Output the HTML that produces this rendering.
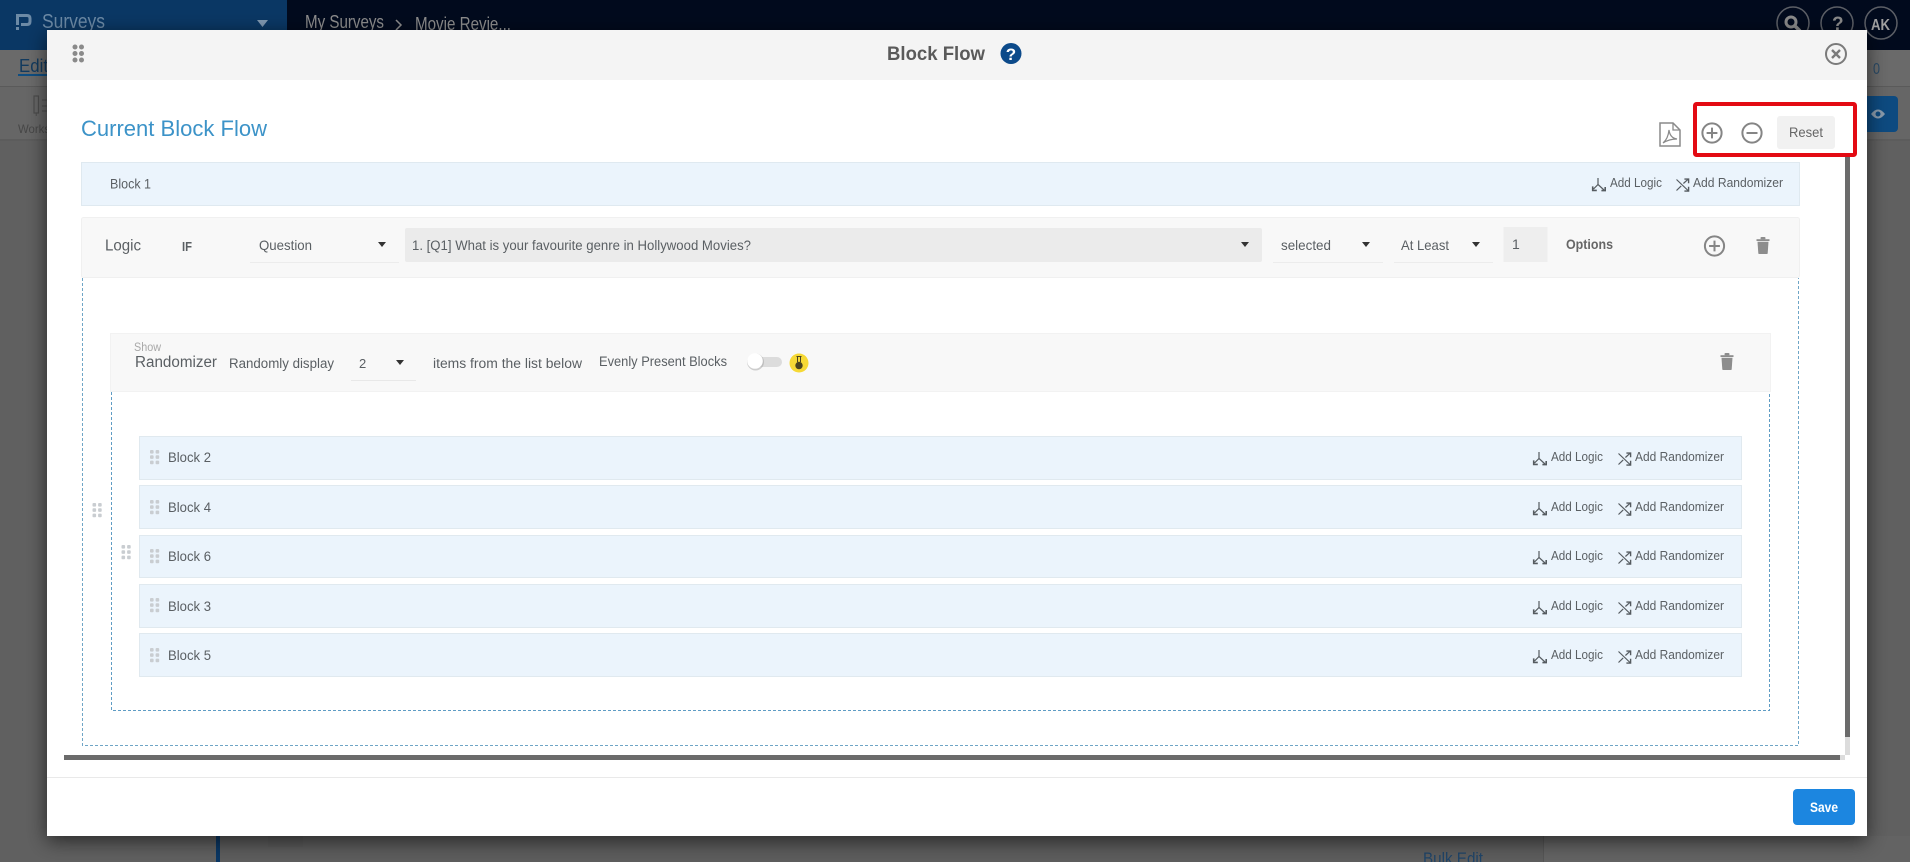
<!DOCTYPE html>
<html lang="en">
<head>
<meta charset="utf-8">
<title>Block Flow</title>
<style>
html,body{margin:0;padding:0;background:#606060;width:1910px;height:862px;overflow:hidden}
svg{display:block;position:absolute;left:0;top:0}
text{font-family:"Liberation Sans",sans-serif;fill:#5a5f63;font-size:13px}
</style>
</head>
<body>
<svg width="1910" height="862" viewBox="0 0 1910 862" xmlns="http://www.w3.org/2000/svg">
<defs>
<filter id="sh" x="-5%" y="-5%" width="110%" height="112%"><feDropShadow dx="0" dy="5" stdDeviation="10" flood-color="#000" flood-opacity=".6"/></filter>
<g id="grip" fill="#c9cdd1"><rect x="0" y="0" width="3.6" height="3.6" rx="1"/><rect x="5.6" y="0" width="3.6" height="3.6" rx="1"/><rect x="0" y="5.3" width="3.6" height="3.6" rx="1"/><rect x="5.6" y="5.3" width="3.6" height="3.6" rx="1"/><rect x="0" y="10.6" width="3.6" height="3.6" rx="1"/><rect x="5.6" y="10.6" width="3.6" height="3.6" rx="1"/></g>
<g id="logic" fill="none" stroke="#555b60" stroke-width="1.2"><path d="M6 0V6.5L12 12"/><path d="M6 6.5L1.5 11"/><path d="M0.7 8.4V12.4H4.8" stroke-width="1.6"/><path d="M13.2 9V12.6H9.4" stroke-width="1.6"/></g>
<g id="rand" fill="none" stroke="#555b60" stroke-width="1.2"><path d="M0.5 1L12 12"/><path d="M0.5 12L5.2 7.4"/><path d="M7.4 5L12 0.8"/><path d="M8.4 0.6H12.6V4.8" stroke-width="1.4"/><path d="M12.6 8.2V12.6H8.4" stroke-width="1.4"/></g>
<g id="trash" fill="#8d8d8d"><rect x="0" y="2.2" width="13" height="1.8"/><rect x="4" y="0" width="5" height="2.4" rx="1"/><path d="M1 4.8H12L11.2 16.2Q11.1 17 10.2 17H2.8Q1.9 17 1.8 16.2Z"/></g>
<g id="plus" fill="none" stroke="#858585" stroke-width="2"><circle cx="0" cy="0" r="9.6"/><path d="M-5.4 0H5.4M0 -5.4V5.4"/></g>
<g id="rowacts">
<use href="#logic" x="1533" y="-9"/>
<text x="1551" y="0" textLength="52" lengthAdjust="spacingAndGlyphs">Add Logic</text>
<use href="#rand" x="1618" y="-8.5"/>
<text x="1635" y="0" textLength="89" lengthAdjust="spacingAndGlyphs">Add Randomizer</text>
</g>
</defs>

<!-- dimmed page behind the modal -->
<rect width="1910" height="862" fill="#606060"/>
<rect x="0" y="0" width="1910" height="50" fill="#010a1d"/>
<rect x="0" y="0" width="287" height="50" fill="#0a3764"/>
<rect x="0" y="50" width="1910" height="36" fill="#6a6a6a"/>
<rect x="0" y="86" width="1910" height="54" fill="#666"/>
<rect x="0" y="86" width="1910" height="1" fill="#5a5a5a"/>
<rect x="0" y="139" width="1910" height="2" fill="#5c5c5c"/>
<rect x="1543" y="836" width="367" height="26" fill="#636363"/>
<rect x="220" y="836" width="1323" height="26" fill="#5d5d5d"/>
<rect x="216" y="836" width="4" height="26" fill="#0a3764"/>
<rect x="268" y="836" width="35" height="11" fill="#595959"/>
<rect x="1543" y="836" width="1" height="26" fill="#555"/>
<text x="1423" y="864" textLength="60" lengthAdjust="spacingAndGlyphs" style="font-size:17px;fill:#1f4468">Bulk Edit</text>

<path d="M17.500 25V15.500H27Q30 15.500 30 18.500V21.500Q30 24.500 27 24.500H21" fill="none" stroke="#6c8aa6" stroke-width="3"/>
<rect x="16" y="27" width="3" height="3" fill="#6c8aa6"/>
<text x="42" y="28" textLength="63" lengthAdjust="spacingAndGlyphs" style="font-size:20px;fill:#6c8aa6">Surveys</text>
<path d="M257 20H268L262.500 27Z" fill="#7f98b0"/>
<text x="305" y="28" textLength="79" lengthAdjust="spacingAndGlyphs" style="font-size:18px;fill:#8d8d8d">My Surveys</text>
<path d="M396 20L401 25L396 30" fill="none" stroke="#8d8d8d" stroke-width="1.500"/>
<text x="415" y="30" textLength="96" lengthAdjust="spacingAndGlyphs" style="font-size:18px;fill:#8d8d8d">Movie Revie...</text>
<g fill="none" stroke="#5c5f66" stroke-width="1.500"><circle cx="1793" cy="23" r="16"/><circle cx="1837" cy="23" r="16"/><circle cx="1881" cy="23" r="16"/></g>
<circle cx="1791" cy="22" r="5" fill="none" stroke="#8a8a8a" stroke-width="3"/><path d="M1795 26L1800 31" stroke="#8a8a8a" stroke-width="3.500"/>
<text x="1832" y="30" style="font-size:19px;font-weight:bold;fill:#8a8a8a">?</text>
<text x="1871" y="30" textLength="19" lengthAdjust="spacingAndGlyphs" style="font-size:16px;font-weight:bold;fill:#a0a0a0">AK</text>
<text x="19" y="72" textLength="29" lengthAdjust="spacingAndGlyphs" style="font-size:18px;fill:#123a5e">Edit</text>
<rect x="18" y="74" width="30" height="2" fill="#0f4e82"/>
<rect x="34" y="96" width="4.500" height="17" fill="none" stroke="#4c4c4c" stroke-width="1.200"/>
<path d="M36.200 113V116M42 100H47M42 106H47M42 111H47" stroke="#4c4c4c"/>
<text x="18" y="133" textLength="32" lengthAdjust="spacingAndGlyphs" style="font-size:12px;fill:#474747">Works</text>
<text x="1873" y="74" textLength="7" lengthAdjust="spacingAndGlyphs" style="font-size:16px;fill:#2a4a66">0</text>
<rect x="1860" y="96" width="38" height="36" rx="4" fill="#0d4a80"/>
<path d="M1871 114Q1878 105 1885 114Q1878 123 1871 114Z" fill="#8a9bab"/><circle cx="1878" cy="114" r="2.500" fill="#0d4a80"/>

<!-- modal -->
<rect x="47" y="30" width="1820" height="806" fill="#fff" filter="url(#sh)"/>
<rect x="47" y="30" width="1820" height="50" fill="#f4f4f4"/>
<g fill="#8a8a8a"><circle cx="75" cy="47" r="2.500"/><circle cx="81.500" cy="47" r="2.500"/><circle cx="75" cy="53.500" r="2.500"/><circle cx="81.500" cy="53.500" r="2.500"/><circle cx="75" cy="60" r="2.500"/><circle cx="81.500" cy="60" r="2.500"/></g>
<text x="887" y="60" textLength="98" lengthAdjust="spacingAndGlyphs" style="font-size:19.500px;font-weight:bold;fill:#5a5a5a">Block Flow</text>
<circle cx="1011" cy="53.500" r="10.500" fill="#0c4a8a"/>
<text x="1011" y="60" text-anchor="middle" style="font-size:17px;font-weight:bold;fill:#fff">?</text>
<circle cx="1836" cy="54" r="10" fill="none" stroke="#7b7b7b" stroke-width="2"/>
<path d="M1832 50L1840 58M1840 50L1832 58" stroke="#7b7b7b" stroke-width="2.400"/>

<text x="81" y="136" textLength="186" lengthAdjust="spacingAndGlyphs" style="font-size:22px;fill:#3c93c8">Current Block Flow</text>

<!-- pdf icon -->
<path d="M1660 123H1673L1680 130V146H1660Z" fill="none" stroke="#8a8a8a" stroke-width="1.500"/>
<path d="M1673 123V130H1680" fill="none" stroke="#8a8a8a" stroke-width="1.300"/>
<path d="M1663 143Q1668 139 1669 130Q1670 138 1677 139Q1669 139 1663 143Z" fill="none" stroke="#8a8a8a" stroke-width="1.200"/>
<!-- zoom controls -->
<use href="#plus" x="1712" y="133"/>
<g fill="none" stroke="#858585" stroke-width="2"><circle cx="1752" cy="133" r="9.600"/><path d="M1746.500 133H1757.500"/></g>
<rect x="1777" y="116" width="58" height="33" rx="3" fill="#f1f1f1"/>
<text x="1789" y="137" textLength="34" lengthAdjust="spacingAndGlyphs" style="font-size:14px;fill:#666">Reset</text>
<rect x="1695" y="104" width="160" height="51" rx="1.500" fill="none" stroke="#e30a13" stroke-width="4"/>

<!-- scrollbars -->
<rect x="1845" y="157" width="5" height="580" fill="#6b6b6b"/>
<rect x="1845" y="737" width="5" height="18" fill="#dcdcdc"/>
<rect x="64" y="755" width="1776" height="5" fill="#6b6b6b"/>
<rect x="1840" y="755" width="5" height="5" fill="#dcdcdc"/>

<!-- Block 1 -->
<rect x="81.500" y="162.500" width="1718" height="43" fill="#ebf4fc" stroke="#dfe9f0"/>
<text x="110" y="188.500" textLength="41" lengthAdjust="spacingAndGlyphs" style="font-size:14px">Block 1</text>
<use href="#logic" x="1592" y="178"/>
<text x="1610" y="187" textLength="52" lengthAdjust="spacingAndGlyphs">Add Logic</text>
<use href="#rand" x="1676" y="178.500"/>
<text x="1693" y="187" textLength="90" lengthAdjust="spacingAndGlyphs">Add Randomizer</text>

<!-- Logic row -->
<rect x="81.500" y="217.500" width="1718" height="60" rx="2" fill="#f8f8f8" stroke="#f0f0f0"/>
<text x="105" y="250.500" textLength="36" lengthAdjust="spacingAndGlyphs" style="font-size:16px">Logic</text>
<text x="182" y="251" textLength="10" lengthAdjust="spacingAndGlyphs" style="font-size:13px;font-weight:bold">IF</text>
<text x="259" y="250" textLength="53" lengthAdjust="spacingAndGlyphs" style="font-size:14px">Question</text>
<rect x="250" y="262" width="149" height="1" fill="#ececec"/>
<path d="M378 242H386L382 247Z" fill="#333"/>
<rect x="405" y="228" width="857" height="34" rx="2" fill="#ebebeb"/>
<text x="412" y="250" textLength="339" lengthAdjust="spacingAndGlyphs" style="font-size:13.500px">1. [Q1] What is your favourite genre in Hollywood Movies?</text>
<path d="M1241 242H1249L1245 247Z" fill="#333"/>
<text x="1281" y="250" textLength="50" lengthAdjust="spacingAndGlyphs" style="font-size:14px">selected</text>
<rect x="1273" y="262" width="110" height="1" fill="#ececec"/>
<path d="M1362 242H1370L1366 247Z" fill="#333"/>
<text x="1401" y="250" textLength="48" lengthAdjust="spacingAndGlyphs" style="font-size:14px">At Least</text>
<rect x="1394" y="262" width="99" height="1" fill="#ececec"/>
<path d="M1472 242H1480L1476 247Z" fill="#333"/>
<rect x="1503.500" y="227" width="44" height="35" fill="#eeeeee"/>
<text x="1512" y="249" style="font-size:14px">1</text>
<text x="1566" y="249" textLength="47" lengthAdjust="spacingAndGlyphs" style="font-size:13.500px;font-weight:bold;fill:#666">Options</text>
<use href="#plus" x="1714.500" y="246"/>
<use href="#trash" x="1756.500" y="237"/>

<!-- outer dashed -->
<path d="M82.500 278V745.500H1798.500V278" fill="none" stroke="#6fa5c6" stroke-dasharray="3 2"/>

<!-- Randomizer header -->
<rect x="110.500" y="333.500" width="1660" height="58" fill="#f8f8f8" stroke="#f2f2f2"/>
<text x="134" y="351" textLength="27" lengthAdjust="spacingAndGlyphs" style="font-size:11.500px;fill:#a8a8a8">Show</text>
<text x="135" y="367" textLength="82" lengthAdjust="spacingAndGlyphs" style="font-size:15.500px">Randomizer</text>
<text x="229" y="368" textLength="105" lengthAdjust="spacingAndGlyphs" style="font-size:13.500px">Randomly display</text>
<text x="359" y="368" style="font-size:13px">2</text>
<path d="M396 360H404L400 365Z" fill="#333"/>
<rect x="351" y="380" width="65" height="1" fill="#e8e8e8"/>
<text x="433" y="368" textLength="149" lengthAdjust="spacingAndGlyphs" style="font-size:13.500px">items from the list below</text>
<text x="599" y="366" textLength="128" lengthAdjust="spacingAndGlyphs" style="font-size:13.500px">Evenly Present Blocks</text>
<rect x="748" y="357" width="34" height="10" rx="5" fill="#dcdcdc"/>
<circle cx="755.500" cy="362" r="8.500" fill="#999" opacity=".45"/>
<circle cx="755" cy="361" r="7.800" fill="#fff"/>
<circle cx="799" cy="363" r="9.500" fill="#f6d936"/>
<path d="M797.500 356.500V362M800.500 356.500V362M796.500 356.500H801.500" fill="none" stroke="#4a4420" stroke-width="1"/>
<circle cx="799" cy="365.500" r="3.700" fill="#4a4420"/>
<use href="#trash" x="1720.500" y="353"/>

<!-- inner dashed -->
<path d="M111.500 392V710.500H1769.500V392" fill="none" stroke="#5f9cc4" stroke-dasharray="3 2"/>

<!-- drag grips -->
<use href="#grip" x="92.500" y="503"/>
<use href="#grip" x="121.500" y="545"/>

<!-- Blocks -->
<g>
<rect x="139.500" y="436.500" width="1602" height="43" fill="#ebf4fc" stroke="#e0e9ef"/>
<use href="#grip" x="150" y="450"/>
<text x="168" y="462" textLength="43" lengthAdjust="spacingAndGlyphs" style="font-size:14px">Block 2</text>
<use href="#rowacts" x="0" y="461"/>
</g>
<g>
<rect x="139.500" y="485.500" width="1602" height="43" fill="#ebf4fc" stroke="#e0e9ef"/>
<use href="#grip" x="150" y="500"/>
<text x="168" y="512" textLength="43" lengthAdjust="spacingAndGlyphs" style="font-size:14px">Block 4</text>
<use href="#rowacts" x="0" y="511"/>
</g>
<g>
<rect x="139.500" y="535.500" width="1602" height="42" fill="#ebf4fc" stroke="#e0e9ef"/>
<use href="#grip" x="150" y="549"/>
<text x="168" y="561" textLength="43" lengthAdjust="spacingAndGlyphs" style="font-size:14px">Block 6</text>
<use href="#rowacts" x="0" y="560"/>
</g>
<g>
<rect x="139.500" y="584.500" width="1602" height="43" fill="#ebf4fc" stroke="#e0e9ef"/>
<use href="#grip" x="150" y="598"/>
<text x="168" y="611" textLength="43" lengthAdjust="spacingAndGlyphs" style="font-size:14px">Block 3</text>
<use href="#rowacts" x="0" y="610"/>
</g>
<g>
<rect x="139.500" y="633.500" width="1602" height="43" fill="#ebf4fc" stroke="#e0e9ef"/>
<use href="#grip" x="150" y="648"/>
<text x="168" y="660" textLength="43" lengthAdjust="spacingAndGlyphs" style="font-size:14px">Block 5</text>
<use href="#rowacts" x="0" y="659"/>
</g>

<!-- footer -->
<rect x="47" y="777" width="1820" height="1" fill="#e9e9e9"/>
<rect x="1793" y="789" width="62" height="36" rx="4" fill="#1c86e0"/>
<text x="1810" y="812" textLength="28" lengthAdjust="spacingAndGlyphs" style="font-size:14px;font-weight:bold;fill:#fff">Save</text>
</svg>
</body>
</html>
